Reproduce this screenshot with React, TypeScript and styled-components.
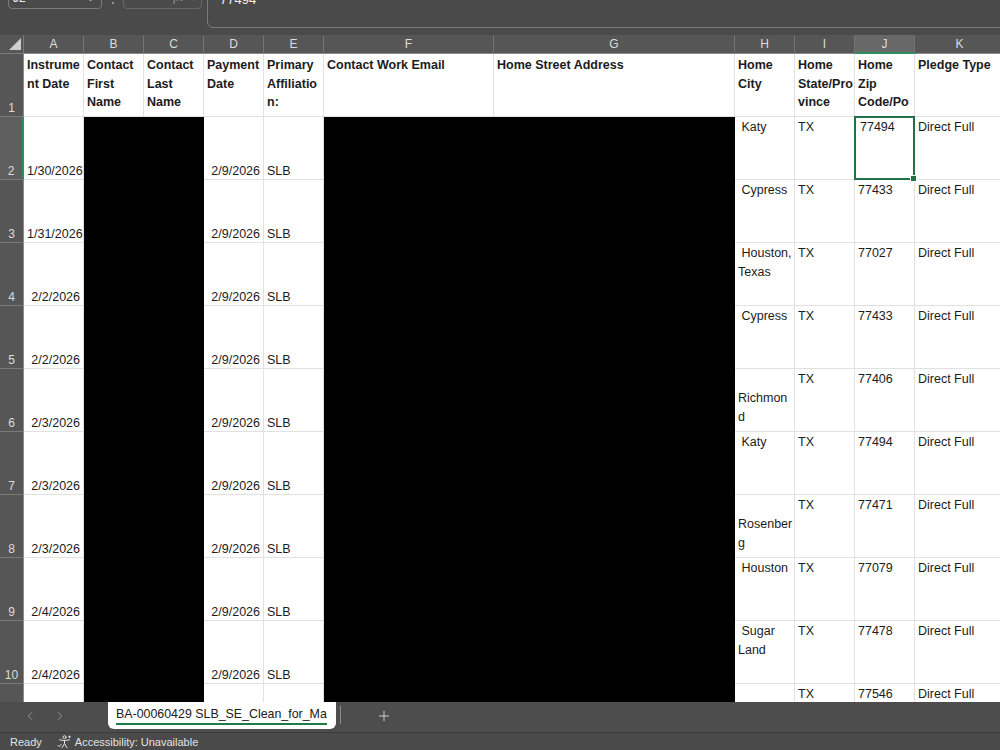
import React from 'react';
import styled, { createGlobalStyle, css } from 'styled-components';
import { X, Check, ChevronDown, ChevronLeft, ChevronRight, Plus } from 'lucide-react';

const GlobalStyle = createGlobalStyle`
  html, body {
    margin: 0;
    padding: 0;
    background: #4a4a4a;
  }
  body {
    font-family: "Liberation Sans", Arial, sans-serif;
    overflow: hidden;
  }
`;

const Window = styled.div`
  width: 1000px;
  height: 750px;
  display: flex;
  flex-direction: column;
  background: #4a4a4a;
  overflow: hidden;
`;

// formula bar (only its lower edge is on screen)
const FormulaBar = styled.div`
  flex: none;
  height: 35px;
  display: flex;
  align-items: flex-start;
  padding-left: 8px;
  overflow: hidden;
`;

const NameBox = styled.div`
  width: 94px;
  height: 30px;
  margin-top: -21px;
  box-sizing: border-box;
  border: 1px solid #7a7a7a;
  border-radius: 4px;
  display: flex;
  align-items: flex-end;
  justify-content: space-between;
  padding: 0 5px 3px 4px;
  color: #eeeeee;
  font-size: 12px;
  line-height: 14px;
`;

const Dots = styled.div`
  width: 21px;
  margin-top: -8px;
  display: flex;
  flex-direction: column;
  align-items: center;
  gap: 3px;
  span {
    width: 2px;
    height: 2px;
    border-radius: 1px;
    background: #b0b0b0;
  }
`;

const FxBox = styled.div`
  width: 79px;
  height: 30px;
  margin-top: -21px;
  box-sizing: border-box;
  border: 1px solid #686868;
  border-radius: 4px;
  display: flex;
  align-items: flex-end;
  gap: 7px;
  padding: 0 4px 4px 7px;
  color: #8c8c8c;
`;

const FxLabel = styled.span`
  font-family: "Liberation Serif", serif;
  font-style: italic;
  font-size: 14px;
  line-height: 14px;
  margin-left: 6px;
`;

const FormulaInput = styled.div`
  flex: 1;
  height: 40px;
  margin-top: -12px;
  margin-left: 5px;
  margin-right: -10px;
  box-sizing: border-box;
  border: 1px solid #7a7a7a;
  border-radius: 6px;
  padding: 3px 12px 0;
  color: #eeeeee;
  font-size: 13px;
  line-height: 16px;
`;

// grid
const Sheet = styled.div`
  flex: none;
  height: 667px;
  display: grid;
  grid-template-columns: 24px 60px 60px 60px 60px 60px 170px 241px 60px 60px 60px 90px;
  grid-template-rows: 19px repeat(11, 63px);
  overflow: hidden;
`;

const Corner = styled.div`
  background: #565656;
  border-right: 1px solid #7c7c7c;
  border-bottom: 1px solid #7c7c7c;
  display: flex;
  justify-content: flex-end;
  align-items: flex-end;
  padding: 0 2px 3px 0;
  span {
    width: 12px;
    height: 12px;
    background: #cfcfcf;
    clip-path: polygon(100% 0, 100% 100%, 0 100%);
  }
`;

const ColHead = styled.div<{ $active?: boolean }>`
  box-sizing: border-box;
  background: ${(p) => (p.$active ? '#686868' : '#565656')};
  border-right: 1px solid #747474;
  border-bottom: ${(p) => (p.$active ? '2px solid #2f8f5b' : '1px solid #8a8a8a')};
  color: #dcdcdc;
  font-size: 12px;
  display: flex;
  align-items: center;
  justify-content: center;
`;

const RowHead = styled.div<{ $active?: boolean }>`
  box-sizing: border-box;
  background: ${(p) => (p.$active ? '#5f5f5f' : '#565656')};
  border-bottom: 1px solid #7a7a7a;
  border-right: ${(p) => (p.$active ? '2px solid #2f8f5b' : '1px solid #8a8a8a')};
  color: #dcdcdc;
  font-size: 12px;
  line-height: 15px;
  display: flex;
  align-items: flex-end;
  justify-content: center;
`;

const Cell = styled.div<{
  $align?: 'left' | 'right';
  $valign?: 'top' | 'bottom';
  $bold?: boolean;
  $redacted?: boolean;
  $selected?: boolean;
}>`
  box-sizing: border-box;
  position: relative;
  background: #ffffff;
  border-right: 1px solid #e1e1e1;
  border-bottom: 1px solid #e1e1e1;
  color: #1c1c1c;
  font-size: 12.5px;
  font-weight: ${(p) => (p.$bold ? 700 : 400)};
  line-height: ${(p) => (p.$valign === 'bottom' ? '15px' : p.$bold ? '18.5px' : '19px')};
  padding: ${(p) => (p.$valign === 'bottom' ? '0 3px' : p.$bold ? '2px 3px 0' : '1px 3px 0')};
  white-space: pre;
  overflow: hidden;
  display: flex;
  flex-direction: column;
  justify-content: ${(p) => (p.$valign === 'bottom' ? 'flex-end' : 'flex-start')};
  text-align: ${(p) => p.$align || 'left'};
  ${(p) =>
    p.$redacted &&
    css`
      background: #000000;
      border-color: #000000;
    `}
  ${(p) =>
    p.$selected &&
    css`
      overflow: visible;
      z-index: 1;
      padding-left: 5px;
      &::before {
        content: '';
        position: absolute;
        inset: -1px -1px -1px -1px;
        border: 2px solid #217346;
      }
      &::after {
        content: '';
        position: absolute;
        right: -3px;
        bottom: -3px;
        width: 5px;
        height: 5px;
        background: #217346;
        border: 1px solid #ffffff;
      }
    `}
`;

// sheet tabs + status
const TabBar = styled.div`
  flex: none;
  height: 30px;
  display: flex;
  align-items: flex-start;
  background: #4d4d4d;
  border-bottom: 1px solid #3b3b3b;
`;

const NavArrows = styled.div`
  width: 108px;
  height: 28px;
  display: flex;
  align-items: center;
  gap: 16px;
  padding-left: 23px;
  box-sizing: border-box;
  color: #9c9c9c;
`;

const SheetTab = styled.div`
  width: 228px;
  height: 27px;
  box-sizing: border-box;
  background: #ffffff;
  border-radius: 0 0 6px 6px;
  padding: 4px 9px 0 8px;
`;

const TabLabel = styled.div`
  color: #202020;
  font-size: 12.4px;
  line-height: 16px;
  white-space: nowrap;
  overflow: hidden;
  border-bottom: 2px solid #1e7a46;
  padding-bottom: 1px;
`;

const TabDivider = styled.div`
  width: 1px;
  height: 18px;
  margin: 4px 0 0 4px;
  background: #8a8a8a;
`;

const AddSheet = styled.div`
  height: 28px;
  display: flex;
  align-items: center;
  margin-left: 35px;
  color: #dcdcdc;
`;

const StatusBar = styled.div`
  flex: 1;
  display: flex;
  align-items: center;
  padding: 1px 0 0 10px;
  color: #e2e2e2;
  font-size: 11px;
  background: #4a4a4a;
`;

const StatusItem = styled.span`
  display: flex;
  align-items: center;
  gap: 3px;
  margin-right: 15px;
`;

type CellSpec = {
  text?: string;
  align?: 'left' | 'right';
  valign?: 'top' | 'bottom';
  bold?: boolean;
  redacted?: boolean;
  selected?: boolean;
};

const letters = ['A', 'B', 'C', 'D', 'E', 'F', 'G', 'H', 'I', 'J', 'K'];

const headers = [
  'Instrume\nnt Date',
  'Contact\nFirst\nName',
  'Contact\nLast\nName',
  'Payment\nDate',
  'Primary\nAffiliatio\nn:',
  'Contact Work Email',
  'Home Street Address',
  'Home\nCity',
  'Home\nState/Pro\nvince',
  'Home\nZip\nCode/Po',
  'Pledge Type',
];

// last row is cut by the tab bar, so its bottom-aligned values are not drawn
const records = [
  { date: '1/30/2026', paid: '2/9/2026', org: 'SLB', city: '\u00a0Katy', zip: '77494' },
  { date: '1/31/2026', paid: '2/9/2026', org: 'SLB', city: '\u00a0Cypress', zip: '77433' },
  { date: '2/2/2026', paid: '2/9/2026', org: 'SLB', city: '\u00a0Houston,\nTexas', zip: '77027' },
  { date: '2/2/2026', paid: '2/9/2026', org: 'SLB', city: '\u00a0Cypress', zip: '77433' },
  { date: '2/3/2026', paid: '2/9/2026', org: 'SLB', city: '\nRichmon\nd', zip: '77406' },
  { date: '2/3/2026', paid: '2/9/2026', org: 'SLB', city: '\u00a0Katy', zip: '77494' },
  { date: '2/3/2026', paid: '2/9/2026', org: 'SLB', city: '\nRosenber\ng', zip: '77471' },
  { date: '2/4/2026', paid: '2/9/2026', org: 'SLB', city: '\u00a0Houston', zip: '77079' },
  { date: '2/4/2026', paid: '2/9/2026', org: 'SLB', city: '\u00a0Sugar\nLand', zip: '77478' },
  { date: '', paid: '', org: '', city: '', zip: '77546' },
];

const rows: CellSpec[][] = [
  headers.map((text) => ({ text, bold: true, valign: 'top' })),
  ...records.map((r, i): CellSpec[] => [
    { text: r.date, align: 'right', valign: 'bottom' },
    { redacted: true },
    { redacted: true },
    { text: r.paid, align: 'right', valign: 'bottom' },
    { text: r.org, valign: 'bottom' },
    { redacted: true },
    { redacted: true },
    { text: r.city, valign: 'top' },
    { text: 'TX', valign: 'top' },
    { text: r.zip, valign: 'top', selected: i === 0 },
    { text: 'Direct Full', valign: 'top' },
  ]),
];

const AccessibilityIcon = () => (
  <svg width='15' height='14' viewBox='0 0 15 14' fill='none' stroke='#e2e2e2' strokeWidth='1' strokeLinecap='round'>
    <circle cx='7.5' cy='2.2' r='1.5' />
    <path d='M2.5 4.8 L7.5 5.6 L12.5 4.8' />
    <path d='M7.5 5.6 V8.6 L5 12.8 M7.5 8.6 L10 12.8' />
    <path d='M1 10.5 L2.2 11.7 L4 9.5' />
    <path d='M12.5 1 V2.6 M11.7 1.8 H13.3' />
  </svg>
);

class App extends React.PureComponent {
  render () {
    return (
      <Window>
        <GlobalStyle />
        <FormulaBar>
          <NameBox>
            <span>J2</span>
            <ChevronDown size={11} color='#d0d0d0' />
          </NameBox>
          <Dots><span /><span /><span /></Dots>
          <FxBox>
            <X size={14} strokeWidth={1.4} />
            <Check size={14} strokeWidth={1.4} />
            <FxLabel>fx</FxLabel>
            <ChevronDown size={9} />
          </FxBox>
          <FormulaInput>77494</FormulaInput>
        </FormulaBar>

        <Sheet>
          <Corner><span /></Corner>
          {letters.map((l) => (
            <ColHead key={l} $active={l === 'J'}>{l}</ColHead>
          ))}
          {rows.map((row, r) => (
            <React.Fragment key={r}>
              <RowHead $active={r === 1}>{r < 10 ? r + 1 : ''}</RowHead>
              {row.map((c, ci) => (
                <Cell
                  key={ci}
                  $align={c.align}
                  $valign={c.valign}
                  $bold={c.bold}
                  $redacted={c.redacted}
                  $selected={c.selected}
                >
                  {c.text}
                </Cell>
              ))}
            </React.Fragment>
          ))}
        </Sheet>

        <TabBar>
          <NavArrows>
            <ChevronLeft size={14} strokeWidth={1.5} />
            <ChevronRight size={14} strokeWidth={1.5} />
          </NavArrows>
          <SheetTab>
            <TabLabel>BA-00060429 SLB_SE_Clean_for_Ma</TabLabel>
          </SheetTab>
          <TabDivider />
          <AddSheet>
            <Plus size={16} strokeWidth={1.3} />
          </AddSheet>
        </TabBar>

        <StatusBar>
          <StatusItem>Ready</StatusItem>
          <StatusItem>
            <AccessibilityIcon />
            Accessibility: Unavailable
          </StatusItem>
        </StatusBar>
      </Window>
    );
  }
}

export default App;
